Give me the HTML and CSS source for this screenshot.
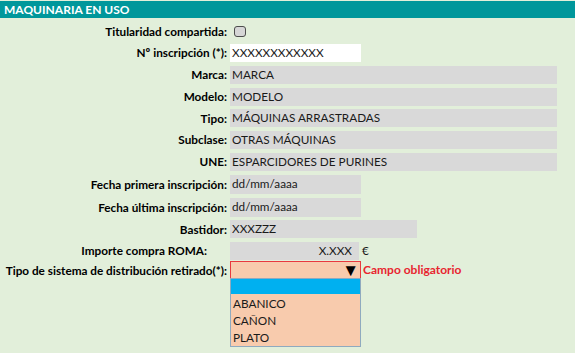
FILE: index.html
```html
<!DOCTYPE html>
<html lang="es">
<head>
  <meta charset="UTF-8">
  <title>Maquinaria en uso</title>
  <link rel="stylesheet" href="styles.css">
</head>
<body>

  <header class="section-title">MAQUINARIA EN USO</header>

  <div class="form-grid">
    <div class="label">Titularidad compartida:</div>
    <div class="field"><span class="checkbox"></span></div>

    <div class="label">Nº inscripción (*):</div>
    <div class="field"><span class="box box-white">XXXXXXXXXXXX</span></div>

    <div class="label">Marca:</div>
    <div class="field"><span class="box box-wide">MARCA</span></div>

    <div class="label">Modelo:</div>
    <div class="field"><span class="box box-wide">MODELO</span></div>

    <div class="label">Tipo:</div>
    <div class="field"><span class="box box-wide">MÁQUINAS ARRASTRADAS</span></div>

    <div class="label">Subclase:</div>
    <div class="field"><span class="box box-wide">OTRAS MÁQUINAS</span></div>

    <div class="label">UNE:</div>
    <div class="field"><span class="box box-wide">ESPARCIDORES DE PURINES</span></div>

    <div class="label">Fecha primera inscripción:</div>
    <div class="field"><span class="box box-tall">dd/mm/aaaa</span></div>

    <div class="label">Fecha última inscripción:</div>
    <div class="field"><span class="box box-tall">dd/mm/aaaa</span></div>

    <div class="label">Bastidor:</div>
    <div class="field"><span class="box box-mid">XXXZZZ</span></div>

    <div class="label label-left">Importe compra ROMA:</div>
    <div class="field"><span class="box box-amount">X.XXX</span><span class="currency">€</span></div>

    <div class="label">Tipo de sistema de distribución retirado(*):</div>
    <div class="field field-select">
      <div class="select"><span class="arrow">▼</span></div>
      <span class="required">Campo obligatorio</span>
      <div class="options">
        <div class="option selected"></div>
        <div class="option">ABANICO</div>
        <div class="option">CAÑON</div>
        <div class="option">PLATO</div>
      </div>
    </div>
  </div>

</body>
</html>
```

FILE: styles.css
```css
html {
  background-color: #e2efda;
}

body {
  font-family: Lato, "Open Sans", sans-serif;
  font-size: 11.75px;
  background-color: #e2efda;
  margin: 0;
  padding: 1px 0 0;
  min-height: 100vh;
  box-sizing: border-box;
  color: #1a1a1a;
}

.section-title {
  background-color: #00979b;
  color: white;
  font-weight: bold;
  font-size: 12px;
  height: 17px;
  line-height: 17px;
  padding-left: 4px;
}

.form-grid {
  display: grid;
  grid-template-columns: 230px auto;
  grid-template-rows: 21px 21px 23px 21px 22px 21px 23px 23px 22px 22px 21px 19px;
  margin-top: 3px;
  padding-bottom: 80px;
}

.label {
  font-weight: bold;
  color: #000;
  text-align: right;
  padding-right: 3px;
  align-self: center;
  white-space: nowrap;
}

.label-left {
  padding-right: 23px;
}

.field {
  display: flex;
  align-items: center;
}

.box {
  background-color: #d9d9d9;
  height: 18px;
  line-height: 18px;
  padding-left: 2px;
  box-sizing: border-box;
  white-space: nowrap;
}

.box-white {
  background-color: #fff;
  width: 131px;
}

.box-wide {
  width: 327px;
}

.box-tall {
  width: 131px;
  height: 19px;
}

.box-mid {
  width: 187px;
}

.box-amount {
  width: 129px;
  text-align: right;
  padding-right: 7px;
}

.currency {
  margin-left: 3px;
}

.checkbox {
  display: inline-block;
  width: 10px;
  height: 9px;
  margin-left: 4px;
  border: 1px solid #4d4d4d;
  border-radius: 3px;
  background-color: #d6d6d6;
}

.field-select {
  position: relative;
  align-items: flex-start;
}

.select {
  position: relative;
  width: 131px;
  height: 18px;
  box-sizing: border-box;
  border: 1px solid #e8393f;
  background-color: #f8cbad;
}

.arrow {
  position: absolute;
  right: 1px;
  top: 0;
  font-size: 17px;
  line-height: 16px;
  color: #000;
}

.required {
  color: #e8252f;
  font-weight: bold;
  font-size: 12px;
  margin-left: 2px;
  line-height: 18px;
}

.options {
  position: absolute;
  z-index: 1;
  left: 0;
  top: 17px;
  width: 131px;
  box-sizing: border-box;
  border: 1px solid #8faabf;
  background-color: #f8cbad;
}

.option {
  height: 17px;
  line-height: 17px;
  padding-left: 2px;
}

.option.selected {
  background-color: #00b0f0;
  height: 15px;
  margin-bottom: 1px;
}
```
